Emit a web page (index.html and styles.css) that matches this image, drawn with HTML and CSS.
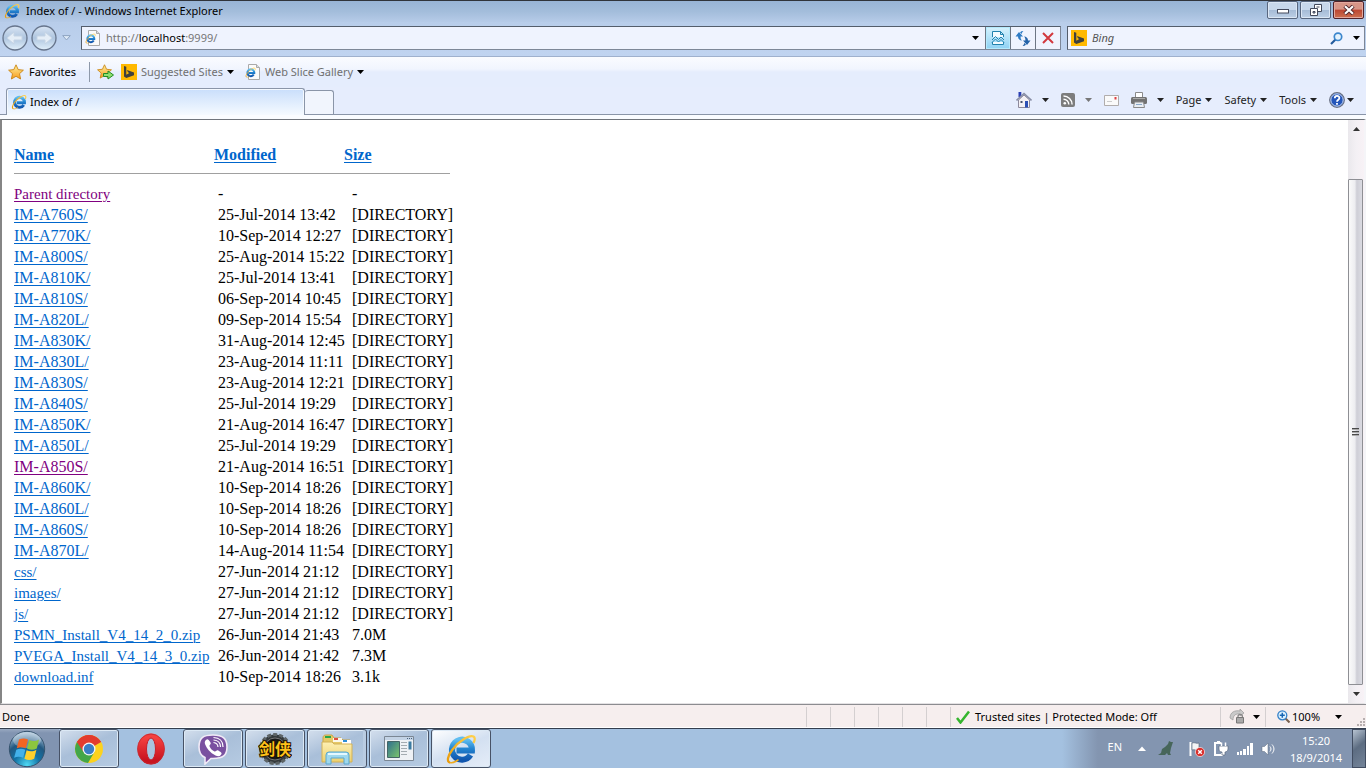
FILE: index.html
```html
<!DOCTYPE html>
<html lang="en">
<head>
<meta charset="utf-8">
<title>Index of /</title>
<link rel="stylesheet" href="styles.css">
</head>
<body>
<svg class="sprite" aria-hidden="true">
  <defs>
    <linearGradient id="g-ie" x1="0" y1="0" x2="0" y2="1"><stop offset="0" stop-color="#5fbdf0"/><stop offset=".45" stop-color="#2384d0"/><stop offset="1" stop-color="#1156ae"/></linearGradient>
    <linearGradient id="g-gold" x1="0" y1="1" x2="1" y2="0"><stop offset="0" stop-color="#e89b0c"/><stop offset="1" stop-color="#ffd04a"/></linearGradient>
    <linearGradient id="g-star" x1="0" y1="0" x2="0" y2="1"><stop offset="0" stop-color="#fff3a0"/><stop offset="1" stop-color="#f79a1c"/></linearGradient>
    <linearGradient id="g-nav" x1="0" y1="0" x2="0" y2="1"><stop offset="0" stop-color="#d9e5f4"/><stop offset=".5" stop-color="#aec5df"/><stop offset="1" stop-color="#e2f0fb"/></linearGradient>
    <radialGradient id="g-orb" cx=".5" cy=".95" r=".9"><stop offset="0" stop-color="#4fd9f4"/><stop offset=".4" stop-color="#1273a6"/><stop offset=".7" stop-color="#225880"/><stop offset="1" stop-color="#9fbcd4"/></radialGradient>
    <linearGradient id="g-opera" x1="0" y1="0" x2="0" y2="1"><stop offset="0" stop-color="#f4403f"/><stop offset="1" stop-color="#c81420"/></linearGradient>
    <linearGradient id="g-folder" x1="0" y1="0" x2="0" y2="1"><stop offset="0" stop-color="#fdf0b4"/><stop offset="1" stop-color="#ecd06e"/></linearGradient>
    <linearGradient id="g-app" x1="0" y1="0" x2="1" y2="1"><stop offset="0" stop-color="#2f6f8e"/><stop offset="1" stop-color="#7cc66b"/></linearGradient>
  </defs>
  <symbol id="ie" viewBox="0 0 32 32">
    <path d="M25.500 22A10 10 0 1 1 27 17.500H11.500" fill="none" stroke="url(#g-ie)" stroke-width="6"/>
    <path d="M5 29.500C1.500 29 2.500 23 7.500 16.500 14 8 24.500 1.500 28.500 3.500c2 1.200 1.300 3.800 0 6.500" fill="none" stroke="url(#g-gold)" stroke-width="2.300"/>
    <path d="M5 29.500c3 1 6-1 8.500-2.800" fill="none" stroke="#efab1d" stroke-width="1.600"/>
  </symbol>
  <symbol id="page-ie" viewBox="0 0 16 16">
    <path d="M3.500.5h8l3 3v12h-11z" fill="#fbfbfb" stroke="#aaa"/><path d="M11.500.5v3h3" fill="#ddd" stroke="#aaa"/>
    <use href="#ie" x="0" y="3" width="11" height="11"/>
  </symbol>
  <symbol id="bing" viewBox="0 0 16 16"><path fill="#ffb900" d="M0 0h16v16H0z"/><path d="M3 2l2.300.8v8l3-1.800-1.400-.7L6 6l7 2.400v2.800L5.300 14 3 12.600z" fill="#40413c"/></symbol>
  <symbol id="star" viewBox="0 0 16 16"><path d="M8 .8l2.200 4.800 5.200.6-3.900 3.500 1.100 5.300L8 12.300 3.400 15l1.100-5.300L.6 6.200l5.200-.6z" fill="url(#g-star)" stroke="#c98514" stroke-width=".9"/></symbol>
  <symbol id="caret" viewBox="0 0 7 4"><path d="M0 0h7L3.500 4z" fill="currentColor"/></symbol>
</svg>

<header class="titlebar">
  <svg class="i16"><use href="#ie"/></svg>
  <h1 class="title">Index of / - Windows Internet Explorer</h1>
  <div class="winbtns">
    <button class="winbtn" aria-label="Minimize"><svg width="12" height="12" viewBox="0 0 12 12"><rect x=".5" y="5.500" width="11" height="3.500" fill="#fff" stroke="#444a5c"/></svg></button>
    <button class="winbtn" aria-label="Restore"><svg width="12" height="12" viewBox="0 0 12 12"><path d="M4.500.5h7v7h-7zM6.500 3h3" fill="#fff" stroke="#444a5c"/><path d="M.5 4.500h7v7h-7z" fill="#fff" stroke="#444a5c"/><path d="M3 7.500h2v1.500H3z" fill="#aab9d0" stroke="#444a5c"/></svg></button>
    <button class="winbtn close" aria-label="Close"><svg width="12" height="10" viewBox="0 0 12 10"><path d="M1.800 1l8.400 8M10.200 1l-8.400 8" stroke="#51272b" stroke-width="4"/><path d="M2 1.300l8 7.400M10 1.300L2 8.700" stroke="#fff" stroke-width="2.200"/></svg></button>
  </div>
</header>

<nav class="addressrow">
  <div class="navbtns">
    <button class="round" aria-label="Back"><svg width="26" height="26" viewBox="0 0 26 26"><circle cx="13" cy="13" r="12" fill="url(#g-nav)" stroke="#67758c" stroke-width="1.300"/><path d="M5 13l7-6v4h8v4h-8v4z" fill="#e5eef7" stroke="#c5d4e5"/></svg></button>
    <button class="round" aria-label="Forward"><svg width="26" height="26" viewBox="0 0 26 26"><circle cx="13" cy="13" r="12" fill="url(#g-nav)" stroke="#67758c" stroke-width="1.300"/><path d="M21 13l-7-6v4H6v4h8v4z" fill="#e5eef7" stroke="#c5d4e5"/></svg></button>
    <button class="recent" aria-label="Recent pages"><svg width="9" height="6" viewBox="0 0 9 6"><path d="M.7.600h7.600L4.500 5z" fill="#dce8f6" stroke="#8ea4c2"/></svg></button>
  </div>
  <div class="box address">
    <svg class="i16"><use href="#page-ie"/></svg>
    <a class="url" href="#">http://<b>localhost</b>:9999/</a>
    <button class="plain drop" aria-label="Show addresses"><svg class="caret"><use href="#caret"/></svg></button>
    <button class="seg lit" aria-label="Compatibility view"><svg width="14" height="16" viewBox="0 0 14 16"><path d="M1.500 7V1.500h8l3 3V7M9.500 1.500v3h3M1.500 12v2.500h11V12" fill="#f4fbff" stroke="#2282ae"/><path d="M1 10l3.500-3.500 3 3L10 7l3 3M1 12.500L4.500 9l3 3L10 9.500l3 3" fill="none" stroke="#2282ae"/></svg></button>
    <button class="seg" aria-label="Refresh"><svg width="16" height="16" viewBox="0 0 16 16"><path d="M4 2L.5 6.500H3C3 9 4.500 10.300 7 10.500 5.800 9.500 5.500 8 5.600 6.500H8z" fill="#2e7bc4"/><path d="M5 2.500C6 1.200 7 1 8.500 1 7.500 1.800 7 2.500 6.800 4z" fill="#2e7bc4"/><path d="M12 15l3.500-4.500H13C13 8 11.500 6.700 9 6.500c1.200 1 1.500 2.500 1.400 4H8z" fill="#2463a9"/><path d="M11 14.500c-1 1.300-2 1.500-3.500 1.500 1-.8 1.500-1.500 1.700-3z" fill="#2463a9"/></svg></button>
    <button class="seg" aria-label="Stop"><svg width="12" height="12" viewBox="0 0 12 12"><path d="M1 1l10 10M11 1L1 11" stroke="#d2383e" stroke-width="2"/></svg></button>
  </div>
  <div class="box search">
    <svg class="i16"><use href="#bing"/></svg>
    <input class="query" type="text" aria-label="Search Bing" placeholder="Bing">
    <button class="plain" aria-label="Search"><svg width="13" height="13" viewBox="0 0 13 13"><path d="M1 12l4.500-4.500" stroke="#235b9c" stroke-width="2.200"/><circle cx="8" cy="4.800" r="3.700" fill="#e4f2fd" stroke="#3b86cd" stroke-width="1.700"/></svg></button>
    <button class="plain" aria-label="Search options"><svg class="caret"><use href="#caret"/></svg></button>
  </div>
</nav>

<nav class="favrow">
  <button class="plain fav"><svg class="i16"><use href="#star"/></svg>Favorites</button>
  <span class="vline"></span>
  <button class="plain" aria-label="Add to favorites bar"><svg width="17" height="16" viewBox="0 0 17 16"><use href="#star" width="15" height="15"/><path d="M6.500 9.500h4.500V7l5.500 4-5.500 4v-2.500H6.500z" fill="#8fe070" stroke="#238c24"/></svg></button>
  <button class="plain link"><svg class="i16"><use href="#bing"/></svg>Suggested Sites<svg class="caret"><use href="#caret"/></svg></button>
  <button class="plain link"><svg class="i16"><use href="#page-ie"/></svg>Web Slice Gallery<svg class="caret"><use href="#caret"/></svg></button>
</nav>

<div class="tabrow">
  <button class="tab"><svg class="i16"><use href="#ie"/></svg>Index of /</button>
  <button class="newtab" aria-label="New tab"></button>
  <div class="commands">
    <button class="plain cmd" aria-label="Home"><svg width="16" height="16" viewBox="0 0 16 16"><path d="M2.500 0h2.800v5H2.500z" fill="#2b3fb4"/><path d="M2.500 8L8 3l5.500 5v7.500h-11z" fill="#f4f1f5" stroke="#8e8a9c"/><path d="M.5 8.500L8 1.500l7.500 7" fill="none" stroke="#888ea6" stroke-width="1.600"/><path d="M9 9h3v6.500H9z" fill="#2d50b4"/><path d="M4.500 9h2v2h-2z" fill="#48536d"/></svg><svg class="caret"><use href="#caret"/></svg></button>
    <button class="plain cmd grey" aria-label="Feeds"><svg width="14" height="14" viewBox="0 0 14 14"><rect width="14" height="14" rx="2" fill="#7d7d7d"/><circle cx="3.800" cy="10.300" r="1.300" fill="#fff"/><path d="M2.500 6.200a5.300 5.300 0 0 1 5.300 5.300M2.500 3a8.600 8.600 0 0 1 8.600 8.500" fill="none" stroke="#fff" stroke-width="1.400"/></svg><svg class="caret"><use href="#caret"/></svg></button>
    <button class="plain cmd" aria-label="Read mail"><svg width="15" height="11" viewBox="0 0 15 11"><path d="M.5.500h14v10H.5z" fill="#fafafa" stroke="#b1adac"/><path d="M10.500 2h2v2.500h-2z" fill="#df3f43"/><path d="M3 6.500h5" stroke="#ccc"/></svg></button>
    <button class="plain cmd" aria-label="Print"><svg width="16" height="16" viewBox="0 0 16 16"><path d="M4.500.5h7v5h-7z" fill="#fff" stroke="#8a8a8a"/><rect x="0" y="5" width="16" height="7" rx="1.500" fill="#727272"/><path d="M2 6.500h12" stroke="#aaa"/><path d="M3.500 10h9l1 5.500h-11z" fill="#e9edf2" stroke="#888"/><path d="M5 12.500h6" stroke="#88a7c8"/></svg><svg class="caret"><use href="#caret"/></svg></button>
    <button class="plain cmd word">Page<svg class="caret"><use href="#caret"/></svg></button>
    <button class="plain cmd word">Safety<svg class="caret"><use href="#caret"/></svg></button>
    <button class="plain cmd word">Tools<svg class="caret"><use href="#caret"/></svg></button>
    <button class="plain cmd help" aria-label="Help"><svg width="16" height="16" viewBox="0 0 16 16"><circle cx="8" cy="8" r="7.300" fill="#2456ba" stroke="#6a7080" stroke-width="1.200"/><circle cx="8" cy="8" r="6.200" fill="none" stroke="#cbd9f1"/><path d="M5.800 6.200c0-3 4.600-3 4.600-.2C10.400 7.800 8 7.700 8 9.800M8 11v1.800" fill="none" stroke="#fff" stroke-width="1.800"/></svg><svg class="caret"><use href="#caret"/></svg></button>
  </div>
</div>

<main class="viewport">
  <div class="doc">
    <table class="listing">
      <colgroup><col class="c-name"><col class="c-mod"><col class="c-size"></colgroup>
      <thead><tr><th><a href="#">Name</a></th><th><a href="#">Modified</a></th><th><a href="#">Size</a></th></tr></thead>
      <tbody>
        <tr><td><a class="file seen" href="#">Parent directory</a></td><td>-</td><td>-</td></tr>
        <tr><td><a href="#">IM-A760S/</a></td><td>25-Jul-2014 13:42</td><td>[DIRECTORY]</td></tr>
        <tr><td><a href="#">IM-A770K/</a></td><td>10-Sep-2014 12:27</td><td>[DIRECTORY]</td></tr>
        <tr><td><a href="#">IM-A800S/</a></td><td>25-Aug-2014 15:22</td><td>[DIRECTORY]</td></tr>
        <tr><td><a href="#">IM-A810K/</a></td><td>25-Jul-2014 13:41</td><td>[DIRECTORY]</td></tr>
        <tr><td><a href="#">IM-A810S/</a></td><td>06-Sep-2014 10:45</td><td>[DIRECTORY]</td></tr>
        <tr><td><a href="#">IM-A820L/</a></td><td>09-Sep-2014 15:54</td><td>[DIRECTORY]</td></tr>
        <tr><td><a href="#">IM-A830K/</a></td><td>31-Aug-2014 12:45</td><td>[DIRECTORY]</td></tr>
        <tr><td><a href="#">IM-A830L/</a></td><td>23-Aug-2014 11:11</td><td>[DIRECTORY]</td></tr>
        <tr><td><a href="#">IM-A830S/</a></td><td>23-Aug-2014 12:21</td><td>[DIRECTORY]</td></tr>
        <tr><td><a href="#">IM-A840S/</a></td><td>25-Jul-2014 19:29</td><td>[DIRECTORY]</td></tr>
        <tr><td><a href="#">IM-A850K/</a></td><td>21-Aug-2014 16:47</td><td>[DIRECTORY]</td></tr>
        <tr><td><a href="#">IM-A850L/</a></td><td>25-Jul-2014 19:29</td><td>[DIRECTORY]</td></tr>
        <tr><td><a class="seen" href="#">IM-A850S/</a></td><td>21-Aug-2014 16:51</td><td>[DIRECTORY]</td></tr>
        <tr><td><a href="#">IM-A860K/</a></td><td>10-Sep-2014 18:26</td><td>[DIRECTORY]</td></tr>
        <tr><td><a href="#">IM-A860L/</a></td><td>10-Sep-2014 18:26</td><td>[DIRECTORY]</td></tr>
        <tr><td><a href="#">IM-A860S/</a></td><td>10-Sep-2014 18:26</td><td>[DIRECTORY]</td></tr>
        <tr><td><a href="#">IM-A870L/</a></td><td>14-Aug-2014 11:54</td><td>[DIRECTORY]</td></tr>
        <tr><td><a class="file" href="#">css/</a></td><td>27-Jun-2014 21:12</td><td>[DIRECTORY]</td></tr>
        <tr><td><a class="file" href="#">images/</a></td><td>27-Jun-2014 21:12</td><td>[DIRECTORY]</td></tr>
        <tr><td><a class="file" href="#">js/</a></td><td>27-Jun-2014 21:12</td><td>[DIRECTORY]</td></tr>
        <tr><td><a class="file" href="#">PSMN_Install_V4_14_2_0.zip</a></td><td>26-Jun-2014 21:43</td><td>7.0M</td></tr>
        <tr><td><a class="file" href="#">PVEGA_Install_V4_14_3_0.zip</a></td><td>26-Jun-2014 21:42</td><td>7.3M</td></tr>
        <tr><td><a class="file" href="#">download.inf</a></td><td>10-Sep-2014 18:26</td><td>3.1k</td></tr>
      </tbody>
    </table>
  </div>
  <div class="scrollbar">
    <button class="arrow" aria-label="Scroll up"><svg class="caret up"><use href="#caret"/></svg></button>
    <div class="track"><div class="thumb"><svg width="7" height="8" viewBox="0 0 7 8"><path d="M0 .500h7M0 3.500h7M0 6.500h7" stroke="#4a4a4a"/><path d="M0 1.500h7M0 4.500h7M0 7.500h7" stroke="#aaa"/></svg></div></div>
    <button class="arrow" aria-label="Scroll down"><svg class="caret"><use href="#caret"/></svg></button>
  </div>
</main>

<footer class="status">
  <span class="msg">Done</span>
  <span class="cell"></span><span class="cell"></span><span class="cell"></span><span class="cell"></span><span class="cell"></span><span class="cell"></span>
  <span class="cell zone"><svg width="14" height="14" viewBox="0 0 14 14"><path d="M1 8l3.500 4.500L13 1.500" fill="none" stroke="#35b52e" stroke-width="2.500"/></svg>Trusted sites | Protected Mode: Off</span>
  <button class="cell prot" aria-label="Security"><svg width="17" height="15" viewBox="0 0 17 15"><path d="M1 9C1 3 6 1 11 2v-2l4 4-4 3V5C7 4.500 4 6 4 11z" fill="#c9c9c9" stroke="#999" stroke-width=".7"/><path d="M9 9V7.500a2.200 2.200 0 0 1 4.400 0V9" fill="none" stroke="#888" stroke-width="1.300"/><path d="M7.500 8.500h7V14h-7z" fill="#aaa" stroke="#777"/></svg><svg class="caret"><use href="#caret"/></svg></button>
  <button class="cell zoom"><svg width="13" height="13" viewBox="0 0 13 13"><path d="M8.500 8.500l4 4" stroke="#78604d" stroke-width="2"/><circle cx="5.300" cy="5.300" r="4.500" fill="#dff2fe" stroke="#3380c8" stroke-width="1.300"/><path d="M5.300 2.800v5M2.800 5.300h5" stroke="#1866b4" stroke-width="1.500"/></svg>100%<svg class="caret"><use href="#caret"/></svg></button>
  <svg class="grip" width="9" height="9" viewBox="0 0 9 9"><path d="M7 1h2M4 4h2M7 4h2M1 7h2M4 7h2M7 7h2" stroke="#b7afaf" stroke-width="2"/></svg>
</footer>

<footer class="taskbar">
  <button class="start" aria-label="Start"><svg width="38" height="38" viewBox="0 0 38 38"><circle cx="19" cy="19" r="17.700" fill="url(#g-orb)" stroke="#35536e"/><ellipse cx="19" cy="10" rx="14" ry="8" fill="#fff" opacity=".3"/><path d="M11 9.500c3-1.500 6-1.500 9 0l-2.200 8.800c-3-1.500-6-1.500-9 0z" fill="#f26522"/><path d="M21.200 10c3 1.500 6.500 1.500 9.800-.5l-2.200 9c-3.300 1.700-6.500 1.700-9.800 0z" fill="#8cc63e"/><path d="M8.300 19.800c3-1.500 6-1.500 9 0l-2.200 8c-3-1.500-6-1.500-9 0z" fill="#43b1ea"/><path d="M18.600 20.300c3.200 1.500 6.500 1.500 9.800-.5l-2.200 9c-3.300 1.700-6.500 1.700-9.800 0z" fill="#ffd02c"/></svg></button>
  <div class="apps">
    <button class="app" aria-label="Chrome"><svg width="30" height="30" viewBox="0 0 30 30"><circle cx="15" cy="15" r="14" fill="#fcd21e"/><path d="M15 15L2.900 8A14 14 0 0 1 27.100 8z" fill="#e33b2e"/><path d="M15 15L2.900 8A14 14 0 0 0 14 29l6.500-11z" fill="#43a649"/><path d="M15 8h12.100A14 14 0 0 0 2.900 8l6.500 10z" fill="#e33b2e"/><circle cx="15" cy="15" r="6.500" fill="#f4f5f6"/><circle cx="15" cy="15" r="5.200" fill="#3b7ec5"/></svg></button>
    <button class="app flat" aria-label="Opera"><svg width="30" height="32" viewBox="0 0 30 32"><ellipse cx="15" cy="16" rx="9" ry="11" fill="none" stroke="url(#g-opera)" stroke-width="9"/><ellipse cx="15" cy="16" rx="4.500" ry="11" fill="#a9c4df" stroke="#c81e28"/><ellipse cx="15" cy="16" rx="13.500" ry="15" fill="none" stroke="#c42b32" stroke-width=".8"/></svg></button>
    <button class="app" aria-label="Viber"><svg width="32" height="32" viewBox="0 0 32 32"><path d="M16 2C6 2 2 5 2 14c0 6 2 9 6 10.500V31l6-5.500h2c10 0 14-3 14-11.500S26 2 16 2z" fill="#7a51a0" stroke="#f0eaf6" stroke-width="1.600"/><path d="M9 7c1.500-1.500 2.300-.8 4.500 2.500 1 1.800-1.500 2.500-1 3.800 1 2.500 2.800 4.300 5 5.200 1.500.5 1.800-2 3.800-1 3.200 2 4 2.800 2.700 4.300-1.500 1.700-3 2-5.500.7C13 19.500 10 16 8 11c-.5-1.800-.2-3 1-4z" fill="#fff"/><path d="M16.500 9.500c2.800.3 4.300 2 4.500 4.500M16.500 7c4.500.3 7 3 7 7M16.500 4.500c6 .2 9.500 4 9.500 9.500" fill="none" stroke="#fff" stroke-width="1.200"/></svg></button>
    <button class="app" aria-label="剑侠"><svg width="34" height="34" viewBox="0 0 34 34"><circle cx="17" cy="17" r="14.500" fill="#34393b" stroke="#5d6466" stroke-width="3" stroke-dasharray="4 2"/><circle cx="17" cy="17" r="11" fill="#17191a" stroke="#777"/><text class="game" x="17" y="23" text-anchor="middle">剑侠</text></svg></button>
    <button class="app stack" aria-label="Windows Explorer"><svg width="32" height="32" viewBox="0 0 32 32"><path d="M2 5c0-2 1-3 3-3h6l2 3h7l2 2h7v19H2z" fill="#e6c968" stroke="#c9a648"/><path d="M4 3h6v2H4z" fill="#26a54a"/><path d="M12 5h9v4h-9z" fill="#fbf8ea"/><path d="M13 5h4v2h-4z" fill="#df4f3f"/><path d="M21 7h9v4h-9z" fill="#fff"/><path d="M22 7h4v2h-4z" fill="#2d8ed8"/><path d="M1 9h10l2 2h18v18H1z" fill="url(#g-folder)" stroke="#d2b157"/><path d="M5 31v-9q0-3 3-3h17q3 0 3 3v9h-5v-6H10v6z" fill="#9ed8ee" stroke="#5ba7ce"/><path d="M7 21h19" stroke="#e4f8ff" stroke-width="2"/></svg></button>
    <button class="app" aria-label="Application"><svg width="30" height="26" viewBox="0 0 30 26"><path d="M.5.500h29v24H.5z" fill="#eef1f5" stroke="#7b8794"/><path d="M1 2.500h28" stroke="#c3d3e5" stroke-width="3"/><path d="M23 2.500h5" stroke="#48627d" stroke-dasharray="1 1"/><path d="M3.500 5.500h12v16h-12z" fill="url(#g-app)" stroke="#466"/><path d="M17 6.500h6M17 9.500h6M17 12.500h6M17 15.500h6M17 18.500h6" stroke="#a3abb1"/><path d="M24.500 5.500h3v8h-3z" fill="#3c7ca2"/></svg></button>
    <button class="app active" aria-label="Internet Explorer"><svg width="32" height="32"><use href="#ie"/></svg></button>
  </div>
  <div class="tray">
    <span class="lang">EN</span>
    <button class="plain" aria-label="Show hidden icons"><svg width="8" height="5" viewBox="0 0 8 5"><path d="M0 5l4-4.500L8 5z" fill="#fff"/></svg></button>
    <svg class="agent" width="16" height="16" viewBox="0 0 16 16"><path d="M15 1l-1 3-1 3-1 5 1 2h-3l-1-2-2 2H0l3-2 1-4 3-2 3-3 1-3 2 1z" fill="#47665a"/></svg>
    <svg width="16" height="16" viewBox="0 0 16 16"><path d="M1.500 1v14" stroke="#fff" stroke-width="2"/><path d="M3 2c3-1 4 1 7 0v7c-3 1-4-1-7 0z" fill="#f4f5f6" stroke="#4c5a70" stroke-width=".6"/><circle cx="11" cy="11" r="4.600" fill="#d92f2c" stroke="#fff" stroke-width=".6"/><path d="M9.200 9.200l3.600 3.600M12.800 9.200l-3.600 3.600" stroke="#fff" stroke-width="1.400"/></svg>
    <svg width="16" height="16" viewBox="0 0 16 16"><path d="M8 2H2v12h7v-2" fill="none" stroke="#fff" stroke-width="2"/><path d="M4 0h3v2H4z" fill="#fff"/><path d="M6 5h9v3c0 2-2 3-3 3v3H9v-3c-2 0-3-1-3-3z" fill="#fff" stroke="#5c6b82" stroke-width=".7"/><path d="M8.500 1.500V5M12.500 1.500V5" stroke="#fff" stroke-width="1.500"/></svg>
    <svg width="16" height="14" viewBox="0 0 16 14"><path d="M0 10h2v3H0zM3 9h2v4H3zM6 7h3v6H6zM10 4h2v9h-2zM13 1h3v12h-3z" fill="#fff"/></svg>
    <svg width="15" height="14" viewBox="0 0 15 14"><path d="M1 4.500h2.500L7 1v12L3.500 9.500H1z" fill="#fff" stroke="#5a687d" stroke-width=".5"/><path d="M9 4.500c1.300 1.500 1.300 3.500 0 5M11 2.500c2.600 3 2.600 6 0 9" fill="none" stroke="#fff"/></svg>
    <time class="clock"><span>15:20</span><span>18/9/2014</span></time>
    <button class="desktop" aria-label="Show desktop"></button>
  </div>
</footer>
</body>
</html>
```

FILE: styles.css
```css
* { box-sizing: border-box; }

html, body { height: 100%; }

body {
  margin: 0;
  display: flex;
  flex-direction: column;
  overflow: hidden;
  background: #e7eefc;
  color: #000;
  font: 11px/16px "Noto Sans", "Open Sans", "Noto Sans CJK SC", sans-serif;
}

button, input { margin: 0; font: inherit; color: inherit; }
button { cursor: pointer; }
svg { flex: none; display: block; }

.sprite { position: absolute; width: 0; height: 0; }
.i16 { width: 16px; height: 16px; }
.caret { width: 7px; height: 4px; }
.caret.up { transform: rotate(180deg); }

.plain {
  display: flex;
  align-items: center;
  padding: 0;
  border: 0;
  background: none;
  white-space: nowrap;
}

/* Title bar */
.titlebar {
  flex: none;
  display: flex;
  align-items: center;
  gap: 6px;
  height: 22px;
  padding: 0 2px 2px 4px;
  border-top: 1px solid #30343b;
  background: linear-gradient(#98b4d6, #a3bddb 50%, #b6cbe8);
}
.title { margin: 0; flex: 1; font-size: 11px; font-weight: 400; }
.winbtns { display: flex; gap: 2px; align-self: flex-start; }
.winbtn {
  display: flex;
  align-items: center;
  justify-content: center;
  width: 31px;
  height: 18px;
  padding: 0;
  border: 1px solid #58677f;
  border-radius: 2px;
  box-shadow: inset 0 0 0 1px #dbe6f4;
  background: linear-gradient(#c8d8eb 50%, #a5bbd6 50%, #bdd0e6);
}
.winbtn.close {
  border-color: #50222a;
  box-shadow: inset 0 0 0 1px #e2a99f;
  background: linear-gradient(#d79587 45%, #bc4632 50%, #cc7050);
}

/* Address row */
.addressrow {
  flex: none;
  display: flex;
  align-items: center;
  gap: 6px;
  height: 35px;
  padding: 0 1px 2px 2px;
  border-bottom: 1px solid #9fb1cd;
  background: linear-gradient(#b8cdea, #c0d4f0);
}
.navbtns { display: flex; align-items: center; gap: 3px; width: 73px; }
.round, .recent { padding: 0; border: 0; background: none; }
.recent { margin-left: 2px; }
.box {
  display: flex;
  align-items: center;
  height: 24px;
  border: 1px solid #7d8798;
  border-top-color: #545d6b;
  border-left-color: #545d6b;
  background: #eff3fe;
}
.address { flex: 1; padding-left: 3px; }
.url { flex: 1; margin-left: 5px; color: #777; text-decoration: none; }
.url b { color: #000; font-weight: 400; }
.drop { padding: 0 6px; }
.seg {
  display: flex;
  align-items: center;
  justify-content: center;
  width: 25px;
  height: 100%;
  padding: 0;
  border: 0;
  border-left: 1px solid #6d7684;
  background: none;
}
.seg.lit { background: linear-gradient(#d7f2fd, #8ed2f4); box-shadow: inset 0 0 0 1px #b5eafd; }
.search { width: 298px; padding: 0 4px 0 3px; gap: 10px; }
.query {
  flex: 1;
  min-width: 0;
  margin-left: -5px;
  padding: 0;
  border: 0;
  outline: 0;
  background: none;
}
.query::placeholder { color: #555; font-style: italic; opacity: 1; }

/* Favorites bar */
.favrow {
  flex: none;
  display: flex;
  align-items: center;
  gap: 7px;
  height: 30px;
  padding-left: 8px;
  background: linear-gradient(#fafcff, #f1f5fe 40%, #e5edfd 50%);
}
.fav { gap: 5px; }
.vline { width: 1px; height: 20px; margin-left: 6px; background: #8e99aa; }
.link { gap: 4px; margin-right: 4px; color: #707070; }
.link .caret { color: #000; }

/* Tabs and command bar */
.tabrow {
  flex: none;
  display: flex;
  align-items: flex-end;
  height: 32px;
  padding: 0 12px 4px 6px;
  background: linear-gradient(#e6edfd 27px, #8a95a8 27px, #8a95a8 28px, #fafcff 28px);
}
.tab, .newtab { border: 1px solid #8a95a8; border-bottom: 0; border-radius: 3px 3px 0 0; }
.tab {
  display: flex;
  align-items: center;
  gap: 3px;
  width: 299px;
  height: 27px;
  padding: 0 4px;
  box-shadow: inset 0 0 0 1px #f4f9ff;
  background: linear-gradient(#c9defb, #f5faff);
}
.newtab { width: 29px; height: 24px; margin-bottom: 1px; padding: 0; border-left: 0; background: #f1f5fd; }
.commands { display: flex; align-items: center; gap: 12px; height: 30px; margin-left: auto; }
.cmd { gap: 10px; color: #222; }
.cmd.word { gap: 4px; }
.cmd.help { gap: 2px; }
.grey .caret { color: #777; }

/* Page area */
.viewport {
  flex: 1;
  min-height: 0;
  display: flex;
  border-top: 1px solid #70757c;
  border-left: 2px solid #858585;
  border-right: 2px solid #f5f5f8;
  border-bottom: 1px solid #e4e2e4;
  background: #fff;
}
.doc {
  flex: 1;
  min-width: 0;
  overflow: hidden;
  padding: 23px 12px 0;
  font: 16px/19px "Liberation Serif", serif;
}
.listing { width: 436px; border-collapse: collapse; table-layout: fixed; white-space: nowrap; }
.c-name { width: 200px; }
.c-mod { width: 130px; }
.listing th { height: 30px; padding: 2px 0 8px; border-bottom: 1px solid #a0a0a0; text-align: left; }
.listing td { height: 21px; padding: 0 0 2px; vertical-align: top; }
.listing td + td { padding-left: 4px; }
.listing td + td + td { padding-left: 8px; }
.listing tbody tr:first-child td { height: 30px; padding-top: 10px; }
.listing a { color: #0066cc; text-underline-offset: 2px; text-decoration-thickness: 1px; }
.listing a.file { font-size: 15px; line-height: 15px; }
.listing a.seen { color: #800080; }

.scrollbar {
  display: flex;
  flex-direction: column;
  width: 16px;
  background: linear-gradient(90deg, #eae8ec, #f3f0f4 50%, #f8f2f6);
}
.arrow {
  display: flex;
  align-items: center;
  justify-content: center;
  height: 18px;
  padding: 0;
  border: 0;
  background: none;
  color: #333;
}
.track { flex: 1; padding-top: 41px; }
.thumb {
  display: flex;
  align-items: center;
  justify-content: center;
  width: 15px;
  height: 100%;
  border: 1px solid #8e8f94;
  border-radius: 1px;
  background: linear-gradient(90deg, #fafafa, #ededf0 45%, #ceced6 60%, #dbdbe2);
}

/* Status bar */
.status {
  flex: none;
  display: flex;
  align-items: center;
  height: 24px;
  padding-top: 1px;
  border-top: 1px solid #8c8c90;
  border-bottom: 1px solid #fff;
  background: #f6eeee;
}
.msg { flex: 1; padding-left: 2px; }
.cell {
  display: flex;
  align-items: center;
  width: 24px;
  height: 20px;
  padding: 0;
  border: 0;
  border-left: 1px solid #d4cfd0;
  background: none;
  white-space: nowrap;
}
.cell.zone { gap: 5px; width: 270px; padding-left: 5px; }
.cell.prot { gap: 7px; width: 45px; padding-left: 8px; }
.cell.zoom { width: 91px; padding: 0 14px 0 11px; }
.zoom svg:first-child { margin-right: 2px; }
.zoom .caret { margin-left: auto; }
.grip { align-self: flex-end; margin-right: 1px; }

/* Taskbar */
.taskbar {
  flex: none;
  display: flex;
  height: 40px;
  border-top: 1px solid #343e4e;
  background: #a4c1e0;
}
.start {
  width: 59px;
  padding: 0 0 0 8px;
  border: 0;
  background: linear-gradient(#99a9c1, #8194b1 10%, #8194b1);
}
.apps { flex: 1; display: flex; gap: 2px; }
.app {
  display: flex;
  align-items: center;
  justify-content: center;
  width: 60px;
  padding: 0;
  border: 1px solid #475266;
  border-radius: 3px;
  box-shadow: inset 0 0 0 1px #dce9f5;
  background: linear-gradient(155deg, #d4dfed, #a9bfd9 45%, #b6cbe2);
}
.app.flat { border-color: transparent; box-shadow: none; background: none; }
.app.stack { box-shadow: inset -4px 0 0 -1px #b9cce2, inset 0 0 0 1px #dce9f5; }
.app.active { background: linear-gradient(155deg, #fff, #d3e0f1 50%, #e5edf8); }
.game {
  font: 700 16px "Noto Sans CJK SC", sans-serif;
  fill: #ffc21a;
  stroke: #1c1200;
  stroke-width: 2px;
  paint-order: stroke;
}
.tray {
  display: flex;
  align-items: center;
  gap: 8px;
  padding-left: 46px;
  background: linear-gradient(90deg, #a4c1e0, #8395b0 36px);
  color: #fff;
}
.lang { margin-right: 8px; padding-bottom: 4px; }
.tray .plain { margin-right: 4px; }
.agent { margin-right: 7px; }
.clock { display: flex; flex-direction: column; align-items: center; width: 60px; margin-left: 2px; line-height: 17px; }
.desktop {
  align-self: stretch;
  width: 14px;
  margin-left: -2px;
  padding: 0;
  border: 1px solid #414d61;
  background: linear-gradient(140deg, #b7c3d1, #5d6d82 45%, #748499);
}
```
